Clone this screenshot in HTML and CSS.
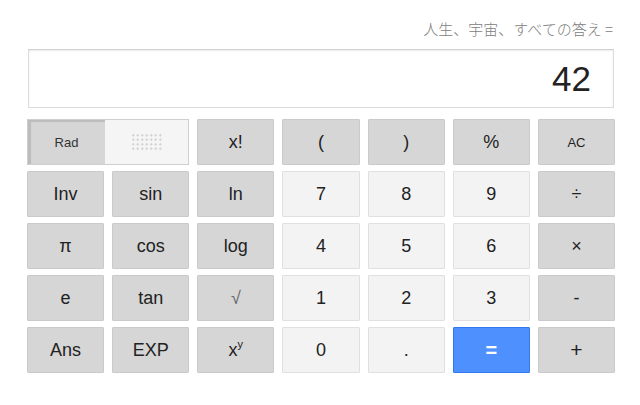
FILE: index.html
```html
<!DOCTYPE html>
<html lang="ja">

<head>
    <meta charset="UTF-8">
    <meta name="viewport" content="width=device-width, initial-scale=1.0">
    <title>電卓</title>
    <link rel="stylesheet" href="styles.css">
</head>

<body>
    <div class="calc">
        <div class="expression">人生、宇宙、すべての答え =</div>
        <div class="display">42</div>

        <div class="keys">
            <div class="toggle">
                <span class="toggle-rad">Rad</span>
                <span class="toggle-deg"><span class="dots"></span></span>
            </div>
            <button class="key key-fn">x!</button>
            <button class="key key-fn">(</button>
            <button class="key key-fn">)</button>
            <button class="key key-fn">%</button>
            <button class="key key-fn key-small">AC</button>

            <button class="key key-fn">Inv</button>
            <button class="key key-fn">sin</button>
            <button class="key key-fn">ln</button>
            <button class="key key-num">7</button>
            <button class="key key-num">8</button>
            <button class="key key-num">9</button>
            <button class="key key-fn">÷</button>

            <button class="key key-fn">π</button>
            <button class="key key-fn">cos</button>
            <button class="key key-fn">log</button>
            <button class="key key-num">4</button>
            <button class="key key-num">5</button>
            <button class="key key-num">6</button>
            <button class="key key-fn">×</button>

            <button class="key key-fn">e</button>
            <button class="key key-fn">tan</button>
            <button class="key key-fn key-muted">√</button>
            <button class="key key-num">1</button>
            <button class="key key-num">2</button>
            <button class="key key-num">3</button>
            <button class="key key-fn">-</button>

            <button class="key key-fn">Ans</button>
            <button class="key key-fn">EXP</button>
            <button class="key key-fn">x<sup>y</sup></button>
            <button class="key key-num">0</button>
            <button class="key key-num">.</button>
            <button class="key key-equals">=</button>
            <button class="key key-fn key-plus">+</button>
        </div>
    </div>
</body>

</html>
```

FILE: styles.css
```css
:root {
    --key-gray: #d6d6d6;
    --key-gray-border: #cacaca;
    --key-light: #f3f3f3;
    --key-light-border: #e0e0e0;
    --blue: #4d90fe;
    --blue-border: #3079ed;
    --text: #222;
}

* {
    box-sizing: border-box;
    margin: 0;
    padding: 0;
}

body {
    font-family: Arial, 'Liberation Sans', sans-serif;
    background: #fff;
    color: var(--text);
}

.calc {
    width: 588px;
    margin-left: 27px;
    padding-top: 18px;
}

.expression {
    font-family: 'Noto Sans CJK JP', sans-serif;
    font-size: 15px;
    font-weight: 300;
    line-height: 22px;
    color: #808080;
    text-align: right;
    padding-right: 2px;
}

.display {
    margin: 9px 1px 0 1px;
    height: 59px;
    border: 1px solid #dcdcdc;
    border-top-color: #d0d0d0;
    box-shadow: inset 0 1px 2px rgba(0, 0, 0, 0.08);
    font-size: 35px;
    line-height: 57px;
    text-align: right;
    padding-right: 22px;
    color: #222;
}

.keys {
    margin-top: 11px;
    display: grid;
    grid-template-columns: repeat(7, 1fr);
    grid-auto-rows: 46px;
    gap: 6px 8px;
}

.key {
    font-family: Arial, 'Liberation Sans', sans-serif;
    font-size: 18px;
    color: var(--text);
    border: 1px solid;
    border-radius: 1px;
    cursor: pointer;
}

.key-fn {
    background: var(--key-gray);
    border-color: var(--key-gray-border);
}

.key-num {
    background: var(--key-light);
    border-color: var(--key-light-border);
}

.key-small {
    font-size: 13px;
}

.key-muted {
    color: #666;
}

.key-plus {
    font-size: 21px;
}

.key sup {
    font-size: 11px;
    vertical-align: 8px;
    line-height: 0;
}

.key-equals {
    background: var(--blue);
    border-color: var(--blue-border);
    color: #fff;
    font-weight: bold;
    font-size: 20px;
}

.toggle {
    grid-column: span 2;
    display: flex;
    border: 1px solid #cfcfcf;
}

.toggle-rad {
    width: 77px;
    display: flex;
    align-items: center;
    justify-content: center;
    background: var(--key-gray);
    box-shadow: inset 3px 2px 1px rgba(0, 0, 0, 0.12);
    font-size: 13px;
    color: #333;
}

.toggle-deg {
    flex-grow: 1;
    display: flex;
    align-items: center;
    justify-content: center;
    background: #f5f5f5;
}

.dots {
    width: 31px;
    height: 18px;
    background-image: radial-gradient(circle, #cfcfcf 1px, transparent 1.2px);
    background-size: 4.5px 4.5px;
}
```
